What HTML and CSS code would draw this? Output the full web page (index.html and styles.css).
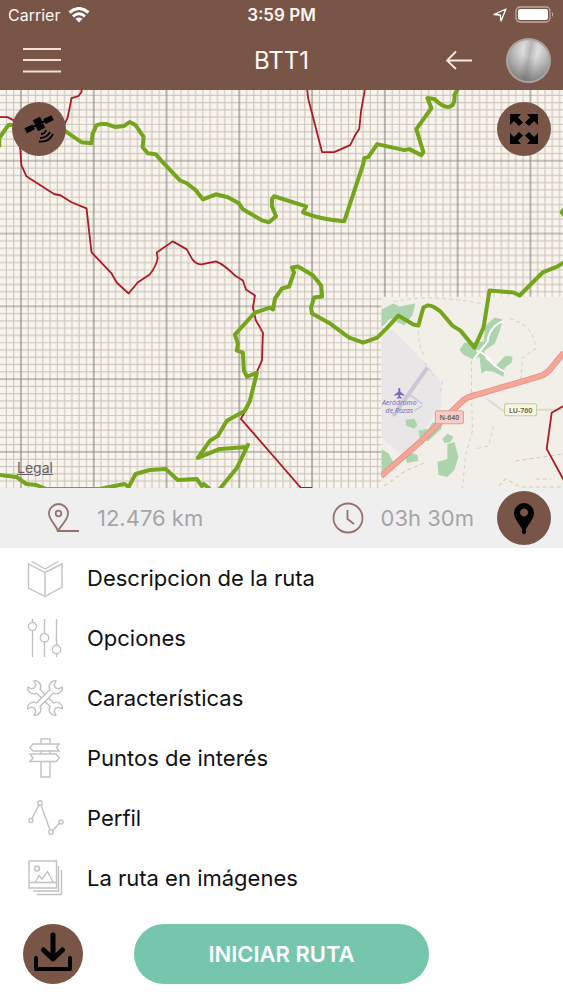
FILE: index.html
```html
<!DOCTYPE html>
<html lang="es">
<head>
  <meta charset="UTF-8">
  <meta name="viewport" content="width=device-width, initial-scale=1">
  <title>BTT1</title>
  <link rel="stylesheet" href="styles.css">
</head>
<body>
  <header class="top">
    <div class="status">
      <div class="status-left">
        <span>Carrier</span>
        <svg class="wifi" viewBox="0 0 22 16" width="22" height="16">
          <g fill="none" stroke="#fff" stroke-width="3">
            <path d="M1.500 5.500Q11 -2.500 20.500 5.500"/>
            <path d="M5 9.300Q11 4.300 17 9.300"/>
          </g>
          <path d="M7.500 11.800Q11 9 14.500 11.800L11 15.500z" fill="#fff"/>
        </svg>
      </div>
      <strong class="time">3:59 PM</strong>
      <div class="status-right">
        <svg viewBox="0 0 14 14" width="14" height="14"><path d="M1 6.500L13 1L8 13L7.300 7z" fill="none" stroke="#fff" stroke-width="1.300" stroke-linejoin="round"/></svg>
        <svg viewBox="0 0 40 18" width="40" height="18">
          <rect x="1" y="1" width="34" height="15" rx="4" fill="none" stroke="#c0aaa2" stroke-width="1.300"/>
          <rect x="3" y="3" width="30" height="11" rx="2" fill="#fff"/>
          <path d="M37 6q2.500 2.500 0 5z" fill="#c0aaa2"/>
        </svg>
      </div>
    </div>
    <div class="nav">
      <button class="icon-btn menu-btn" aria-label="Menú">
        <svg viewBox="0 0 38 26" width="38" height="26"><path d="M0 2H38M0 13H38M0 24.500H38" stroke="#f3dfd8" stroke-width="1.800"/></svg>
      </button>
      <h1>BTT1</h1>
      <div class="nav-right">
        <button class="icon-btn" aria-label="Volver">
          <svg viewBox="0 0 26 20" width="26" height="20"><path d="M26 10.500H1M10 1.500L1 10.500L10 19" fill="none" stroke="#fbe9e3" stroke-width="1.800"/></svg>
        </button>
        <button class="icon-btn avatar" aria-label="Usuario"></button>
      </div>
    </div>
  </header>

  <main>
    <section class="map">
      <svg class="map-canvas" viewBox="0 90 563 397" preserveAspectRatio="xMidYMid slice" role="img" aria-label="Mapa de la ruta">
        <defs>
          <pattern id="grid" x="21.600" y="160.600" width="72.600" height="72.600" patternUnits="userSpaceOnUse">
            <path d="M7.260 0V73M14.520 0V73M21.780 0V73M29.040 0V73M36.300 0V73M43.560 0V73M50.820 0V73M58.080 0V73M65.340 0V73M0 7.260H73M0 14.520H73M0 21.780H73M0 29.040H73M0 36.300H73M0 43.560H73M0 50.820H73M0 58.080H73M0 65.340H73" stroke="#cfc8bf" stroke-width="1.200"/>
            <path d="M0 0V73M0 0H73M72.600 0V73M0 72.600H73" stroke="#8b8984" stroke-width="1.200"/>
          </pattern>
          <clipPath id="tile"><rect x="381" y="296" width="182" height="191"/></clipPath>
        </defs>
        <rect y="90" width="563" height="397" fill="#f9f5ee"/>
        <rect y="90" width="563" height="397" fill="url(#grid)"/>

        <!-- loaded tile -->
        <g clip-path="url(#tile)">
          <rect x="381" y="296" width="182" height="191" fill="#f2efe9"/>
          <path d="M381 327L393 330L425 362L440 380L441 405L430 420L420 440L404 455L381 437z" fill="#e8e6e7"/>
          <g fill="#acd5ad">
            <path d="M381 309L393 303L399 306L415 303L412 315L404 325L390 318L381 327z"/>
            <path d="M381 448L388 452L393 461L381 471z"/>
            <path d="M459 349L464 342L483 341L485 325L494 317L502 319L499 331L494 343L484 350L485 358L494 366L505 355L512 356L511 362L504 367L503 376L493 371L485 370L481 373L479 356L473 359L463 354z"/>
            <path d="M405 419L414 418L417 424L414 428L406 425z"/>
            <path d="M418 430L428 428L432 422L442 420L441 428L428 440L420 439z"/>
            <path d="M404 456L409 451L417 454L418 460L407 462z"/>
            <path d="M442 438L447 433L453 436L450 441L444 442z"/>
            <path d="M447 443L454 441L458 456L454 469L450 473L447 476L438 474L437 461L447 458z"/>
          </g>
          <g fill="none" stroke="#fff" stroke-width="2">
            <path d="M504 320Q489 325 487 341L473 359M476 350Q483 351 489 359T504 371"/>
            <path d="M486 398L504 411M536 409H563" stroke="#dcdcc8"/>
          </g>
          <g fill="none" stroke="#d6d2ca" stroke-dasharray="4 3">
            <path d="M393 301Q430 293 480 303M418 330Q418 346 424 355M509 318Q534 325 535 348L522 357L520 378"/>
            <path d="M424 362L434 375M442 380L440 392M471 360V392L472 430L465 455L462 487M493 425L488 445L475 448"/>
            <path d="M384 485L405 470L424 462M498 485L505 478L520 486H563M535 478H550M515 460L563 453" stroke="#d9c5bf"/>
          </g>
          <path d="M393 415L427 367" stroke="#cac7d4" stroke-width="4"/>
          <path d="M408 393L422 403M414 410L422 405" stroke="#cac7d4" stroke-width="1.500" fill="none"/>
          <path d="M381 475L420 441L460 402Q466 396 476 394L541 375Q546 373 550 368L563 352" fill="none" stroke="#de9287" stroke-width="6"/>
          <path d="M381 475L420 441L460 402Q466 396 476 394L541 375Q546 373 550 368L563 352" fill="none" stroke="#f6a597" stroke-width="4.500"/>
          <path d="M399 387l1 1v3l4 3v1l-4 -1v2l1.500 1v1l-2.500 -0.500l-2.500 0.500v-1l1.500 -1v-2l-4 1v-1l4 -3v-3z" fill="#7668c0"/>
          <g class="place">
            <text x="399" y="404">Aeródromo</text>
            <text x="399" y="412">de Rozas</text>
          </g>
          <rect x="435" y="410" width="28" height="13" rx="2" fill="#f6ccc7" stroke="#de9f98"/>
          <rect x="504" y="403" width="32" height="12" rx="2" fill="#f5f6df" stroke="#c4caa0"/>
          <g class="road">
            <text x="449" y="419">N-640</text>
            <text x="520" y="412">LU-760</text>
          </g>
        </g>

        <g class="trail-red">
          <path d="M82 88L82 92L79 96L72 98L71 104L68 118L65 124"/>
          <path d="M0 117L8 117L14 120L21 149L22 165L27 176L55 194L61 195L72 202L87 208L92 252L112 273L117 282L129 293L138 282L150 274Q156 267 158 258L157 252L173 241L187 249L192 258Q196 264 202 264L216 261Q224 264 235 275L243 280L246 289L255 295L253 307L256 320L263 332L262 360L257 371"/>
          <path d="M245 411L241 418L301 487H312"/>
          <path d="M307 88L308 98L322 152L334 152L350 145L355 135L359 129L361 110L365 88"/>
          <path d="M563 405L551 412L546 448L563 479"/>
        </g>
        <g class="trail-green">
          <path d="M0 147V138L9 125H14L66 131L73 136L82 142L92 143L93 134L97 125L101 124L107 124L116 127L124 126L130 122L136 125L144 137L143 147L148 153L156 154L162 161L180 180L187 183L196 190L203 199L216 194L228 197L239 203L243 209L262 220L269 222L276 216L272 206V199L274 196L306 206L303 212Q320 219 344 221L363 164L364 158L368 157L377 144L404 150L409 149L421 155L423 152L416 129L431 108L427 98L434 99Q442 107 448 107Q455 106 454 95L459 86"/>
          <path d="M563 262L557 266L542 272L519 295L513 292L489 290L483 327L474 347L460 330L452 325L440 311Q432 304 427 305L423 307L418 325L413 324L398 315L387 327L377 337L363 342L349 337L330 323L312 313L311 307L314 297L322 296L321 285L313 275L298 266L292 267L294 272L289 286L282 288L275 298L273 309L270 307L255 312L235 334L238 343L237 350L243 352L244 370L247 376L257 372L250 400L245 410L227 420L218 435L210 440L198 457L220 448L247 446L248 444L237 467L219 489"/>
          <path d="M0 474L17 476L27 483L37 484L47 488H100L125 483L129 486L136 473L150 469L166 468L178 479L197 478L202 485L204 483L210 488"/>
          <path d="M566 206L561 212L566 218"/>
        </g>
      </svg>
      <button class="round map-btn satellite" aria-label="Vista de satélite">
        <svg viewBox="0 0 54 54" width="54" height="54">
          <g transform="rotate(-26 27 22)">
            <path d="M23 16h8v12h-8zM12 19.500h9v5.500h-9zM33 19.500h9v5.500h-9zM20 21h14v2h-14z"/>
          </g>
          <path d="M29 32q4 0 5 -4M28 36q7 0 10 -6M27 39.500q10 1 14 -7.500" fill="none" stroke="#000" stroke-width="1.800"/>
        </svg>
      </button>
      <button class="round map-btn expand" aria-label="Pantalla completa">
        <svg viewBox="0 0 54 54" width="54" height="54">
          <path d="M13 12H24L21 15.500L26 20.500L22 24L17 19L13 23z"/>
          <path d="M41 12H30L33 15.500L28 20.500L32 24L37 19L41 23z"/>
          <path d="M13 42H24L21 38.500L26 33.500L22 30L17 35L13 31z"/>
          <path d="M41 42H30L33 38.500L28 33.500L32 30L37 35L41 31z"/>
        </svg>
      </button>
      <a class="legal" href="#legal">Legal</a>
    </section>

    <section class="info">
      <div class="stat">
        <svg viewBox="0 0 32 30" width="32" height="30" fill="none" stroke="#95736c" stroke-width="1.800">
          <path d="M10 28C8 22 1 17 1 10.500A9.500 9.500 0 0 1 20 10.500C20 17 13 22 10 28H31"/>
          <circle cx="10.500" cy="10.500" r="2.800"/>
        </svg>
        <span>12.476 km</span>
      </div>
      <div class="stat duration">
        <svg viewBox="0 0 32 32" width="32" height="32" fill="none" stroke="#95736c" stroke-width="1.800">
          <circle cx="16" cy="16" r="14.500"/>
          <path d="M15.500 8V17L22 22"/>
        </svg>
        <span>03h 30m</span>
      </div>
      <button class="round" aria-label="Ubicación">
        <svg viewBox="0 0 54 54" width="54" height="54">
          <path fill-rule="evenodd" d="M27 12A10 10 0 0 1 37 22C37 27 33 31 29 38V42L27 43.500L25 42V38C21 31 17 27 17 22A10 10 0 0 1 27 12zM27 17.500a4 4 0 1 0 .1 0z"/>
        </svg>
      </button>
    </section>

    <nav>
      <ul class="options">
        <li><a href="#descripcion">
          <svg viewBox="0 0 40 40"><path d="M3.500 6L20 14.500L37 6V29L20 38.500L3.500 30zM20 14.500V38M7 3.500L20 11L33 3.500"/></svg>
          Descripcion de la ruta
        </a></li>
        <li><a href="#opciones">
          <svg viewBox="0 0 40 40"><path d="M7.500 1V4.500M7.500 12.500V39M19.500 1V15.500M19.500 24V39M31.500 1V27.500M31.500 36V39"/><circle cx="7.500" cy="8.500" r="4"/><circle cx="19.500" cy="19.800" r="4.200"/><circle cx="31.500" cy="31.500" r="4.200"/></svg>
          Opciones
        </a></li>
        <li><a href="#caracteristicas">
          <svg viewBox="0 0 40 40">
            <g fill="#fff" stroke-linejoin="round">
              <path transform="rotate(45 20 20)" d="M10.500 17.500H29.500A6 6 0 0 1 40 15.500L36 17L34.500 20L36 23L40 24.500A6 6 0 0 1 29.500 22.500H10.500A6 6 0 0 1 0 24.500L4 23L5.500 20L4 17L0 15.500A6 6 0 0 1 10.500 17.500z"/>
              <path transform="rotate(-45 20 20)" d="M10.500 17.500H29.500A6 6 0 0 1 40 15.500L36 17L34.500 20L36 23L40 24.500A6 6 0 0 1 29.500 22.500H10.500A6 6 0 0 1 0 24.500L4 23L5.500 20L4 17L0 15.500A6 6 0 0 1 10.500 17.500z"/>
            </g>
          </svg>
          Características
        </a></li>
        <li><a href="#puntos">
          <svg viewBox="0 0 40 40"><path d="M16 6V1H25V6M8 6H34L31.500 9.500L34 13H8L5 9.500zM16 13V16M25 13V16M5 16H31L34.500 20L31 23.500H5L8 20zM16 23.500V39H25V23.500"/></svg>
          Puntos de interés
        </a></li>
        <li><a href="#perfil">
          <svg viewBox="0 0 40 40"><path d="M7 20.500L14 6.500M16 7L25 32M28 32.500L34.500 25"/><circle cx="6" cy="22.500" r="2"/><circle cx="15" cy="5" r="2.200"/><circle cx="26" cy="34" r="2.200"/><circle cx="36" cy="24" r="2"/></svg>
          Perfil
        </a></li>
        <li><a href="#imagenes">
          <svg viewBox="0 0 40 40"><path d="M4 3H31.500V30H4zM4 24.500H31.500M33.500 8V33H8M36.500 12V36.500H12M10.500 24L14 17.500L17 21L22.500 13.500L28 24"/><circle cx="12" cy="10.500" r="2.500"/></svg>
          La ruta en imágenes
        </a></li>
      </ul>
    </nav>
  </main>

  <footer class="actions">
    <button class="round download" aria-label="Descargar">
      <svg viewBox="0 0 60 60" width="60" height="60">
        <path d="M30 11V35M20.500 26L30 35L39.500 26" fill="none" stroke="#000" stroke-width="5" stroke-linecap="round" stroke-linejoin="round"/>
        <path d="M13 34V45H47V34" fill="none" stroke="#000" stroke-width="4" stroke-linecap="round" stroke-linejoin="round"/>
      </svg>
    </button>
    <button class="start">INICIAR RUTA</button>
  </footer>
</body>
</html>
```

FILE: styles.css
```css
* {
  box-sizing: border-box;
}
body {
  margin: 0;
  min-height: 100vh;
  display: flex;
  flex-direction: column;
  background: #fff;
  color: #111;
  font-family: Inter, "Liberation Sans", sans-serif;
}
button {
  padding: 0;
  border: none;
  font-family: inherit;
  cursor: pointer;
}
svg {
  display: block;
}

.top {
  background: #795548;
  color: #fff5f0;
}
.status {
  display: grid;
  grid-template-columns: 1fr auto 1fr;
  align-items: center;
  height: 30px;
  padding: 0 8px;
  font-size: 16px;
}
.status-left, .status-right {
  display: flex;
  align-items: center;
  gap: 8px;
}
.status-right {
  justify-content: flex-end;
}
.time {
  font-size: 17px;
  font-weight: 600;
}
.nav {
  display: grid;
  grid-template-columns: 1fr auto 1fr;
  align-items: center;
  height: 60px;
  padding: 0 12px;
}
.nav h1 {
  margin: 0;
  font-size: 24px;
  font-weight: 400;
}
.nav-right {
  display: flex;
  align-items: center;
  justify-content: flex-end;
  gap: 34px;
}
.icon-btn {
  background: none;
}
.menu-btn {
  justify-self: start;
  margin-left: 11px;
}
.avatar {
  width: 45px;
  height: 45px;
  border: 2px solid #aaa19c;
  border-radius: 50%;
  background: linear-gradient(100deg, transparent 35%, rgba(90, 90, 90, 0.3) 50%, transparent 65%), radial-gradient(circle at 55% 25%, #dedede 20%, #a2a2a2 60%, #666);
}

main {
  flex: 1;
  display: flex;
  flex-direction: column;
}
.map {
  position: relative;
  flex: 1;
  min-height: 300px;
  overflow: hidden;
}
.map-canvas {
  position: absolute;
  width: 100%;
  height: 100%;
}
.trail-red {
  fill: none;
  stroke: #ad1c25;
  stroke-width: 1.800;
  stroke-linejoin: round;
}
.trail-green {
  fill: none;
  stroke: #74a51c;
  stroke-width: 4;
  stroke-linejoin: round;
}
.place {
  font: italic 7px "Noto Sans", sans-serif;
  fill: #7d70bd;
  text-anchor: middle;
}
.road {
  font: 600 7px "Noto Sans", sans-serif;
  fill: #6b5b50;
  text-anchor: middle;
}
.round {
  width: 54px;
  height: 54px;
  border-radius: 50%;
  background: #795548;
}
.map-btn {
  position: absolute;
  top: 12px;
}
.satellite {
  left: 12px;
}
.expand {
  right: 12px;
}
.legal {
  position: absolute;
  left: 17px;
  bottom: 12px;
  color: #66635f;
  font-size: 14px;
  line-height: 16px;
}

.info {
  display: flex;
  align-items: center;
  gap: 23px;
  height: 60px;
  padding: 0 12px 0 48px;
  background: #efeff0;
  color: #a5a5a6;
  font-size: 22px;
}
.stat {
  display: flex;
  align-items: center;
  gap: 17px;
}
.duration {
  margin-left: auto;
}

.options {
  margin: 0;
  padding: 0;
  list-style: none;
}
.options a {
  display: flex;
  align-items: center;
  gap: 22px;
  height: 60px;
  padding: 0 25px;
  color: #111;
  font-size: 22px;
  text-decoration: none;
}
.options svg {
  width: 40px;
  height: 40px;
  fill: none;
  stroke: #c2c2c2;
  stroke-width: 1.400;
}

.actions {
  display: grid;
  grid-template-columns: 1fr auto 1fr;
  align-items: center;
  padding: 16px 23px;
}
.download {
  width: 60px;
  height: 60px;
}
.start {
  height: 60px;
  padding: 0 74px;
  border-radius: 30px;
  background: #76c6ad;
  color: #fff;
  font-size: 22px;
  font-weight: 600;
}
```
